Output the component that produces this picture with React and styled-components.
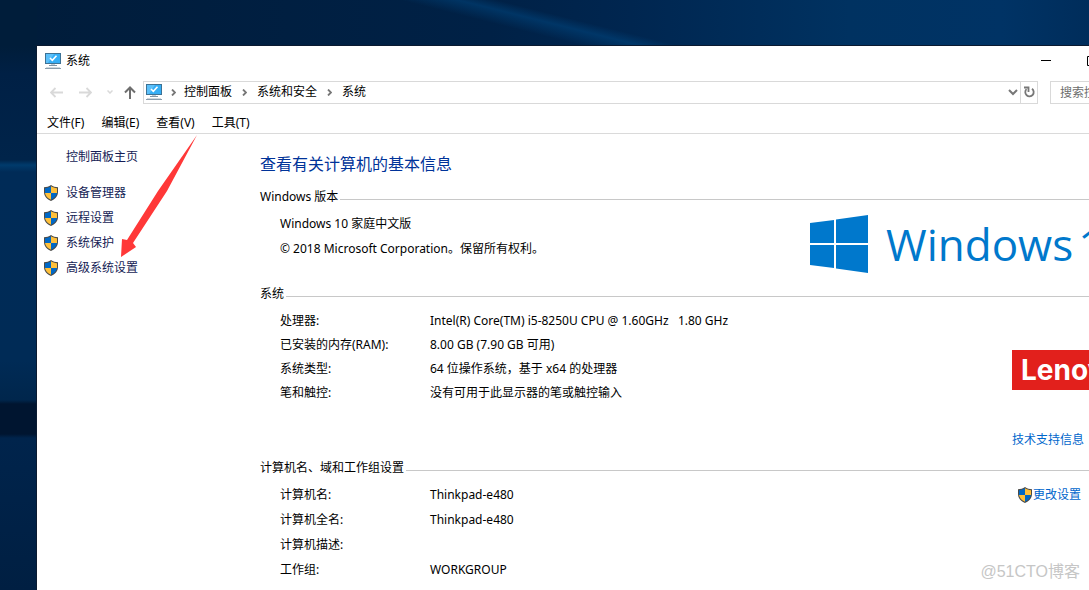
import React from "react";
import styled, { createGlobalStyle } from "styled-components";

const GlobalStyle = createGlobalStyle`
  * {
    box-sizing: border-box;
  }

  body {
    margin: 0;
    font-family: "Noto Sans", "Noto Sans CJK SC", sans-serif;
    font-size: 12px;
    line-height: 16px;
    color: #000;
  }

  button, input {
    font: inherit;
  }
`;

const Desktop = styled.div`
  position: relative;
  display: flex;
  flex-direction: column;
  height: 100vh;
  padding: 46px 0 0 37px;
  overflow: hidden;
  background:
    linear-gradient(14deg, transparent 38%, rgba(0, 72, 130, 0.5) 50%, transparent 58%) 400px 0 / 300px 46px no-repeat,
    linear-gradient(180deg, #001d3a 46px, #002045 74px, #00244a 160px, #003b6c 165px, #002b57 172px, #002b56 360px, #00264c 400px, #001530 404px, #001530 434px, #00244c 438px, #001f42 100%) 0 0 / 37px 100% no-repeat,
    linear-gradient(90deg, #001c3a 0%, #002146 45%, #002650 58%, #003261 78%, #003365 92%, #002d5b 100%);
`;

/* the right side of the window runs past the screen edge */
const Window = styled.div`
  display: flex;
  flex: 1;
  flex-direction: column;
  margin-right: -72px;
  background: #fff;
  box-shadow: 0 0 0 1px #0b1a30;
`;

const TitleBar = styled.header`
  display: flex;
  align-items: center;
  height: 29px;
  padding-left: 8px;
`;

const Title = styled.span`
  flex: 1;
  padding-left: 5px;
`;

const WindowButton = styled.button`
  display: flex;
  align-items: center;
  justify-content: center;
  width: 46px;
  height: 28px;
  padding: 0;
  border: 0;
  background: none;
`;

const AddressRow = styled.div`
  display: flex;
  align-items: center;
  height: 34px;
  padding: 0 11px 0 8px;
`;

const NavButton = styled.button`
  display: flex;
  align-items: center;
  justify-content: center;
  width: ${(props) => props.width || 29}px;
  height: 24px;
  padding: 0;
  border: 0;
  background: none;
`;

const AddressBar = styled.div`
  display: flex;
  flex: 1;
  align-items: center;
  height: 23px;
  border: 1px solid #d9d9d9;
`;

const Crumbs = styled.nav`
  display: flex;
  flex: 1;
  align-items: center;
  padding-left: 2px;
`;

const Crumb = styled.a`
  color: #000;
  text-decoration: none;
`;

const Separator = styled.span`
  display: flex;
  justify-content: center;
  width: ${(props) => (props.first ? 22 : 25)}px;
`;

const Refresh = styled(NavButton)`
  height: 21px;
  border-left: 1px solid #d9d9d9;
`;

const Search = styled.input`
  width: 100px;
  height: 23px;
  margin-left: 12px;
  padding: 0 9px;
  border: 1px solid #d9d9d9;
  border-radius: 0;
  outline: 0;

  &::placeholder {
    color: #6d6d6d;
    opacity: 1;
  }
`;

const MenuBar = styled.nav`
  display: flex;
  align-items: center;
  gap: 17px;
  height: 25px;
  padding: 4px 10px 0;
  border-bottom: 1px solid #dadada;
`;

const MenuItem = styled.button`
  padding: 0;
  border: 0;
  color: #000;
  background: none;
  white-space: nowrap;
`;

const Content = styled.div`
  display: flex;
  flex: 1;
`;

const Sidebar = styled.aside`
  width: 223px;
  padding: 13px 0 0 6px;
`;

const SideLink = styled.a`
  display: flex;
  align-items: center;
  gap: 7px;
  height: 25px;
  color: #151c55;
  text-decoration: none;
`;

const HomeLink = styled(SideLink)`
  height: 20px;
  margin: 0 0 13px 23px;
`;

const Main = styled.main`
  flex: 1;
  padding: 18px 29px 0 0;
`;

const Heading = styled.h1`
  margin: 0 0 10px;
  color: #003399;
  font-size: 16px;
  font-weight: 400;
  line-height: 24px;
`;

const Section = styled.section`
  min-height: ${(props) => props.height}px;
`;

const SectionTitle = styled.h2`
  display: flex;
  align-items: center;
  gap: 2px;
  height: 22px;
  margin: 0 0 3px;
  font-size: 12px;
  font-weight: 400;

  &::after {
    content: "";
    flex: 1;
    margin-top: 4px;
    border-top: 1px solid #c8c8c8;
  }
`;

const SectionBody = styled.div`
  display: flex;
  align-items: flex-start;
  justify-content: space-between;
  padding-top: ${(props) => props.top || 0}px;
`;

const Lines = styled.div`
  padding-left: 20px;
  line-height: 25px;
`;

const Table = styled.table`
  margin-left: 20px;
  border-collapse: collapse;
  white-space: pre;
`;

const Th = styled.th`
  width: 150px;
  height: ${(props) => props.height}px;
  padding: 0;
  font-weight: 400;
  text-align: left;
`;

const Td = styled.td`
  padding: 0;
`;

const Brand = styled.div`
  display: flex;
  align-items: center;
  gap: 17px;
  width: 323px;
  padding-top: 4px;
  color: #0078cc;
  font-family: "Open Sans", sans-serif;
  font-size: 44px;
  line-height: 58px;
  white-space: nowrap;

  svg {
    flex-shrink: 0;
  }
`;

const BrandName = styled.div`
  display: flex;
  gap: 5px;
`;

const SideColumn = styled.div`
  display: flex;
  flex-direction: column;
  align-items: flex-start;
  width: 120px;
`;

const Maker = styled.div`
  width: 100%;
  margin: 41px 0 40px;
  padding-left: 9px;
  color: #fff;
  background: #e2201c;
  font-family: Inter, sans-serif;
  font-size: 28px;
  font-weight: 700;
  line-height: 40px;
`;

const Link = styled.a`
  display: flex;
  align-items: center;
  height: 20px;
  color: #0066cc;
  text-decoration: none;
`;

const ChangeLink = styled(Link)`
  margin: 3px 0 0 5px;
`;

const Arrow = styled.svg`
  position: absolute;
  top: 133px;
  left: 120px;
`;

const Watermark = styled.div`
  position: absolute;
  right: 9px;
  bottom: 6px;
  color: #c6c6c6;
  font-family: "Liberation Sans", "Noto Sans CJK SC", sans-serif;
  font-size: 16px;
  line-height: 24px;
`;

const PcIcon = () => (
  <svg width="16" height="16" viewBox="0 0 16 16">
    <rect width="16" height="11" fill="#3d7295" />
    <rect x="1" y="1" width="14" height="9" fill="#35aef5" />
    <path d="M1 1h8L3 10H1z" fill="#5cc0fa" />
    <path d="M5 5l2.3 2.3L11.5 2.8" fill="none" stroke="#fff" strokeWidth="1.6" />
    <path d="M6 11h4v1H6z" fill="#c3cdd5" />
    <path d="M4 12h8v1H4z" fill="#7f95a5" />
    <path d="M1 14h14v1H1z" fill="#cfd8de" />
    <path d="M0 15h16v1H0z" fill="#8a9dac" />
  </svg>
);

const ShieldIcon = () => (
  <svg width="16" height="16" viewBox="0 0 16 16">
    <path d="M8 0C6 1.500 3.500 2.200 1 2.200V7c0 4.300 3 7.200 7 9 4-1.800 7-4.700 7-9V2.200C12.500 2.200 10 1.500 8 0z" fill="#4a4a48" />
    <path d="M8 1.300C6.200 2.500 4.200 3.100 2 3.200V8h6z" fill="#0068c6" />
    <path d="M8 1.300c1.800 1.200 3.800 1.800 6 1.900V8H8z" fill="#ffc03a" />
    <path d="M2 8h6v6.800C4.700 13.200 2.300 11 2 8z" fill="#ffc03a" />
    <path d="M14 8H8v6.800c3.300-1.600 5.700-3.800 6-6.800z" fill="#0068c6" />
  </svg>
);

const BackIcon = ({ forward }) => (
  <svg width="13" height="11" viewBox="0 0 13 11" fill="none" stroke="#d9d9d9" strokeWidth="1.8">
    <path d={forward ? "M0 5.500h12M7.500 1l4.500 4.500L7.500 10" : "M13 5.500H1M5.500 1L1 5.500 5.500 10"} />
  </svg>
);

const UpIcon = () => (
  <svg width="12" height="13" viewBox="0 0 12 13" fill="none" stroke="#6e6e6e" strokeWidth="2">
    <path d="M6 13V2M1 6.500l5-5 5 5" />
  </svg>
);

const Chevron = ({ color = "#777" }) => (
  <svg width="10" height="7" viewBox="0 0 10 7" fill="none" stroke={color} strokeWidth="2">
    <path d="M1 1l4 4 4-4" />
  </svg>
);

const CrumbIcon = () => (
  <svg width="5" height="7" viewBox="0 0 5 7" fill="none" stroke="#777" strokeWidth="1.800">
    <path d="M1 .5l3 3-3 3" />
  </svg>
);

const RefreshIcon = () => (
  <svg width="11" height="12" viewBox="0 0 11 12" fill="none" stroke="#777" strokeWidth="1.800">
    <path d="M8 2.800a4.200 4.200 0 1 1-5.500.4" />
    <path d="M0 1.500h4.500V6" />
  </svg>
);

const WindowsLogo = () => (
  <svg width="60" height="58" viewBox="0 0 60 58" fill="#0078cc">
    <path d="M1 8l24-3v23H1zM27 4.500L59 0v28H27zM1 30h24v23L1 50zM27 30h32v28l-32-4.500z" />
  </svg>
);

const sideLinks = ["设备管理器", "远程设置", "系统保护", "高级系统设置"];

const system = [
  ["处理器:", "Intel(R) Core(TM) i5-8250U CPU @ 1.60GHz   1.80 GHz"],
  ["已安装的内存(RAM):", "8.00 GB (7.90 GB 可用)"],
  ["系统类型:", "64 位操作系统，基于 x64 的处理器"],
  ["笔和触控:", "没有可用于此显示器的笔或触控输入"],
];

const computer = [
  ["计算机名:", "Thinkpad-e480"],
  ["计算机全名:", "Thinkpad-e480"],
  ["计算机描述:", ""],
  ["工作组:", "WORKGROUP"],
];

const InfoTable = ({ rows, rowHeight }) => (
  <Table>
    <tbody>
      {rows.map(([name, value]) => (
        <tr key={name}>
          <Th scope="row" height={rowHeight}>{name}</Th>
          <Td>{value}</Td>
        </tr>
      ))}
    </tbody>
  </Table>
);

const App = () => {
  return (
    <Desktop lang="zh-CN">
      <GlobalStyle />
      <Window>
        <TitleBar>
          <PcIcon />
          <Title>系统</Title>
          <WindowButton aria-label="最小化">
            <svg width="10" height="10"><path d="M0 4h10v1H0z" /></svg>
          </WindowButton>
          <WindowButton aria-label="最大化">
            <svg width="10" height="10"><path d="M.5.5h9v9h-9z" fill="none" stroke="#000" /></svg>
          </WindowButton>
          <WindowButton aria-label="关闭">
            <svg width="10" height="10"><path d="M0 0l10 10M10 0L0 10" stroke="#000" /></svg>
          </WindowButton>
        </TitleBar>

        <AddressRow>
          <NavButton width={22} aria-label="后退"><BackIcon /></NavButton>
          <NavButton width={37} aria-label="前进"><BackIcon forward /></NavButton>
          <NavButton width={12} aria-label="最近">
            <svg width="6" height="4" viewBox="0 0 6 4" fill="none" stroke="#d9d9d9" strokeWidth="1.500"><path d="M.5.5L3 3 5.500.5" /></svg>
          </NavButton>
          <NavButton width={27} aria-label="向上"><UpIcon /></NavButton>
          <AddressBar>
            <Crumbs>
              <PcIcon />
              <Separator first><CrumbIcon /></Separator>
              <Crumb href="#">控制面板</Crumb>
              <Separator><CrumbIcon /></Separator>
              <Crumb href="#">系统和安全</Crumb>
              <Separator><CrumbIcon /></Separator>
              <Crumb href="#">系统</Crumb>
            </Crumbs>
            <NavButton width={14} aria-label="展开"><Chevron /></NavButton>
            <Refresh width={17} aria-label="刷新"><RefreshIcon /></Refresh>
          </AddressBar>
          <Search type="search" aria-label="搜索" placeholder="搜索控制面板" />
        </AddressRow>

        <MenuBar>
          <MenuItem>文件(F)</MenuItem>
          <MenuItem>编辑(E)</MenuItem>
          <MenuItem>查看(V)</MenuItem>
          <MenuItem>工具(T)</MenuItem>
        </MenuBar>

        <Content>
          <Sidebar>
            <HomeLink href="#">控制面板主页</HomeLink>
            {sideLinks.map((text) => (
              <SideLink key={text} href="#">
                <ShieldIcon />
                {text}
              </SideLink>
            ))}
          </Sidebar>

          <Main>
            <Heading>查看有关计算机的基本信息</Heading>

            <Section height={97}>
              <SectionTitle>Windows 版本</SectionTitle>
              <SectionBody>
                <Lines>
                  <div>Windows 10 家庭中文版</div>
                  <div>© 2018 Microsoft Corporation。保留所有权利。</div>
                </Lines>
                <Brand>
                  <WindowsLogo />
                  <BrandName>
                    <span>Windows</span>
                    <span>10</span>
                  </BrandName>
                </Brand>
              </SectionBody>
            </Section>

            <Section height={174}>
              <SectionTitle>系统</SectionTitle>
              <SectionBody top={1}>
                <InfoTable rows={system} rowHeight={24} />
                <SideColumn>
                  <Maker>Lenovo</Maker>
                  <Link href="#">技术支持信息</Link>
                </SideColumn>
              </SectionBody>
            </Section>

            <Section>
              <SectionTitle>计算机名、域和工作组设置</SectionTitle>
              <SectionBody>
                <InfoTable rows={computer} rowHeight={25} />
                <SideColumn>
                  <ChangeLink href="#">
                    <ShieldIcon />
                    更改设置
                  </ChangeLink>
                </SideColumn>
              </SectionBody>
            </Section>
          </Main>
        </Content>
      </Window>

      <Arrow width="78" height="125" viewBox="0 0 78 125" fill="#ff3838">
        <path d="M77 2L38 58 7 107 2 106 1 124 16 114 13 110 47 58z" />
      </Arrow>
      <Watermark>@51CTO博客</Watermark>
    </Desktop>
  );
};

export default App;
